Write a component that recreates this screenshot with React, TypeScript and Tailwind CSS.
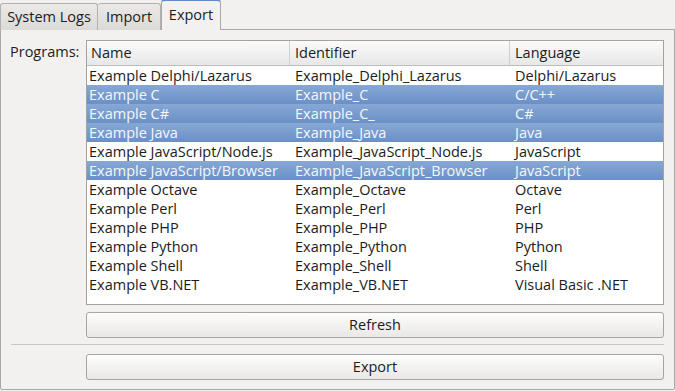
import React from "react";

const rows: [string, string, string, boolean][] = [
  ["Example Delphi/Lazarus", "Example_Delphi_Lazarus", "Delphi/Lazarus", false],
  ["Example C", "Example_C", "C/C++", true],
  ["Example C#", "Example_C_", "C#", true],
  ["Example Java", "Example_Java", "Java", true],
  ["Example JavaScript/Node.js", "Example_JavaScript_Node.js", "JavaScript", false],
  ["Example JavaScript/Browser", "Example_JavaScript_Browser", "JavaScript", true],
  ["Example Octave", "Example_Octave", "Octave", false],
  ["Example Perl", "Example_Perl", "Perl", false],
  ["Example PHP", "Example_PHP", "PHP", false],
  ["Example Python", "Example_Python", "Python", false],
  ["Example Shell", "Example_Shell", "Shell", false],
  ["Example VB.NET", "Example_VB.NET", "Visual Basic .NET", false],
];

export default function App() {
  return (
    <div
      className="w-[675px] h-[391px] bg-[#f2f1f0] text-[#1c1c1c] text-[14.5px] flex flex-col overflow-hidden"
      style={{ fontFamily: '"Open Sans", "Noto Sans", sans-serif' }}
    >
      {/* tab bar */}
      <div className="flex items-end h-[30px] -mb-px relative z-10">
        <div className="h-[27px] w-[98px] border border-[#b3b1ad] border-b-0 rounded-t-[3px] bg-gradient-to-b from-[#ebeae8] to-[#dcdad6] flex items-center justify-center">
          System Logs
        </div>
        <div className="h-[27px] w-[63px] border border-[#b3b1ad] border-l-0 border-b-0 rounded-t-[3px] bg-gradient-to-b from-[#ebeae8] to-[#dcdad6] flex items-center justify-center">
          Import
        </div>
        <div className="h-[31px] w-[60px] border border-[#a8a7a4] border-b-0 border-t-[2px] border-t-[#5f8dc9] rounded-t-[4px] bg-[#f2f1f0] flex items-center justify-center pb-[1px]">
          Export
        </div>
      </div>

      {/* panel */}
      <div className="h-[361px] border border-[#a9a8a5] rounded-b-[2px] flex flex-col pt-[10px] pl-[9px] pr-[10px]">
        <div className="flex">
          <div className="w-[76px] text-right pr-[7px] pt-[1px] whitespace-nowrap">Programs:</div>
          <div className="w-[578px] h-[265px] border border-[#a3a3a3] bg-white flex flex-col">
            <div className="h-[25px] grid grid-cols-[203px_220px_1fr] bg-gradient-to-b from-[#fbfbfb] to-[#e7e7e7] border-b border-[#bdbdbd] shrink-0">
              <div className="pl-[4px] flex items-center border-r border-[#cfcfcf]">Name</div>
              <div className="pl-[5px] flex items-center border-r border-[#cfcfcf]">Identifier</div>
              <div className="pl-[5px] flex items-center">Language</div>
            </div>
            {rows.map(([n, id, lang, sel]) => (
              <div
                key={n}
                className={
                  "h-[19px] grid grid-cols-[203px_220px_1fr] items-center leading-[19px] whitespace-nowrap " +
                  (sel
                    ? "bg-gradient-to-b from-[#87a8d5] to-[#6a90c6] text-[#f4f7fb]"
                    : "bg-white")
                }
              >
                <div className="pl-[2px]">{n}</div>
                <div className="pl-[5px]">{id}</div>
                <div className="pl-[5px]">{lang}</div>
              </div>
            ))}
          </div>
        </div>

        <div className="pl-[76px] mt-[7px]">
          <button className="w-[578px] h-[26px] border border-[#a5a5a5] rounded-[3px] bg-gradient-to-b from-[#fdfdfd] to-[#e9e8e6] flex items-center justify-center">
            Refresh
          </button>
        </div>

        <div className="h-px bg-[#c8c7c4] mt-[6px] ml-[1px] mr-0" />

        <div className="pl-[76px] mt-[9px]">
          <button className="w-[578px] h-[26px] border border-[#a5a5a5] rounded-[3px] bg-gradient-to-b from-[#fdfdfd] to-[#e9e8e6] flex items-center justify-center">
            Export
          </button>
        </div>
      </div>
    </div>
  );
}
